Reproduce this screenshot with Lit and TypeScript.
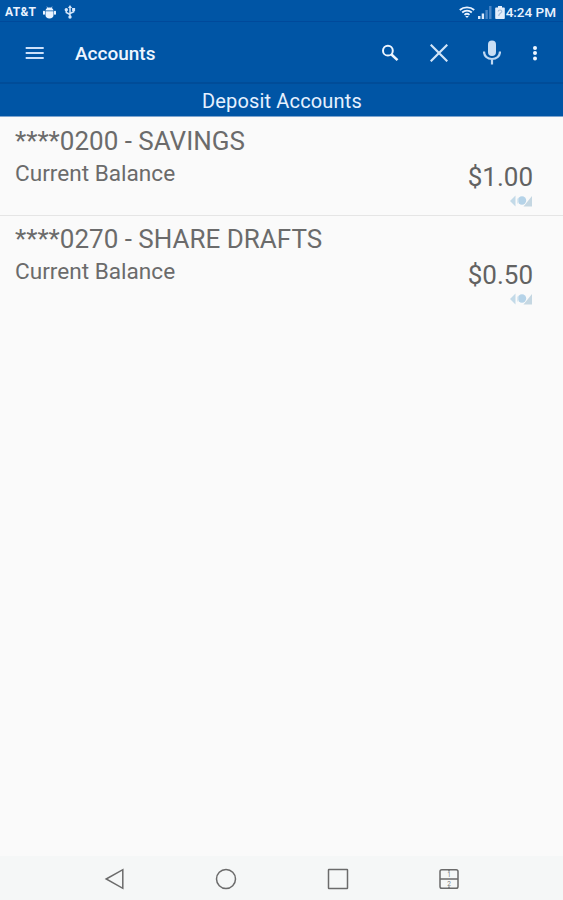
import { LitElement, html, css } from "lit";
import { customElement, property } from "lit/decorators.js";

@customElement("status-bar")
class StatusBar extends LitElement {
  static styles = css`
    :host { display: flex; align-items: center; height: 22px; box-sizing: border-box; padding: 3px 7px 0 5px; color: #eaf3ff; border-bottom: 1px solid #00499a; }
    .carrier { font-size: 12px; font-weight: 700; width: 38px; line-height: 19px; letter-spacing: 0.3px; white-space: nowrap; }
    .grow { flex: 1; }
    .time { font-size: 13.500px; line-height: 19px; font-weight: 500; white-space: nowrap; }
    svg { display: block; flex: none; }
    .usb { margin-left: 8px; }
    .signal { margin-left: 3px; }
    .battery { margin: 0 1px 0 3px; }
  `;
  render() {
    return html`
      <span class="carrier">AT&amp;T</span>
      <svg width="13" height="13" viewBox="0 0 13 13" fill="#eaf3ff"><path d="M2.400 4.600C2.700 3.400 3.300 2.600 4.200 2.100L3.500.8l.5-.3.8 1.300c1-.4 2.400-.4 3.400 0L9 .5l.5.3-.7 1.300c.9.5 1.500 1.300 1.800 2.500zM2.500 5.200h8v3.700c0 2-1.500 3.600-4 3.600s-4-1.600-4-3.600zM0 5.600c0-1 2-1 2 0v2.400c0 1-2 1-2 0zM11 5.600c0-1 2-1 2 0v2.400c0 1-2 1-2 0z"/></svg>
      <svg class="usb" width="12" height="14" viewBox="0 0 12 14"><g fill="none" stroke="#d5e6fa" stroke-width="1.500"><path d="M6 2v9M6 9.500L2.300 7.500V5M6 8.500l3.700-1.700V4.500"/></g><g fill="#d5e6fa"><path d="M6 0l2.100 3H3.900z"/><circle cx="6" cy="12" r="1.700"/><circle cx="2.300" cy="4.700" r="1.700"/><path d="M8.100 3h3v3h-3z"/></g></svg>
      <span class="grow"></span>
      <svg width="16" height="13" viewBox="0 0 16 13"><g fill="none" stroke="#eaf3ff" stroke-width="1.800"><path d="M.8 4c4-3.600 10.400-3.600 14.400 0M3.200 6.500c2.700-2.500 6.900-2.500 9.600 0M5.500 8.900c1.500-1.400 3.500-1.400 5 0"/></g><path fill="#eaf3ff" d="M6.200 10h3.600L8 12.100z"/></svg>
      <svg class="signal" width="14" height="13" viewBox="0 0 14 13"><path fill="#dbe9fa" d="M0 10h2.400v3H0zM3.700 7.500h2.400V13H3.700z"/><path fill="#4a86c6" d="M7.400 4h2.400v9H7.400zM11.100 0h2.400v13h-2.400z"/></svg>
      <svg class="battery" width="10" height="13" viewBox="0 0 10 13"><path fill="#e4eefb" d="M3 0h4v1.500h2c.5 0 .8.3.8.8V12c0 .6-.3 1-.8 1H1c-.5 0-.8-.4-.8-1V2.300c0-.5.300-.8.800-.8h2z"/><path d="M3.200 5.500c0-2 3.600-2 3.600 0 0 1.300-3.100 2-3.100 4.500" fill="none" stroke="#a5bfdd" stroke-width="1.200"/></svg>
      <span class="time">4:24 PM</span>
    `;
  }
}

@customElement("app-toolbar")
class AppToolbar extends LitElement {
  static styles = css`
    :host { display: flex; align-items: center; height: 62px; box-sizing: border-box; padding: 2px 25px 0 25px; border-bottom: 2px solid #004c98; }
    .title { margin-left: 31px; flex: 1; color: #eef6ff; font-size: 19px; font-weight: 500; line-height: 26px; padding-top: 1px; white-space: nowrap; }
    .actions { display: flex; align-items: center; }
    svg { display: block; flex: none; }
    .close { margin-left: 31px; }
    .mic { margin-left: 35px; }
    .more { margin-left: 31px; }
  `;
  render() {
    return html`
      <svg width="19" height="14" viewBox="0 0 19 14" fill="#cce0fa"><path d="M.7 1h18v2.100h-18zM.7 6h18v2.100h-18zM.7 11h18v2.100h-18z"/></svg>
      <span class="title">Accounts</span>
      <div class="actions">
        <svg width="18" height="18" viewBox="0 0 18 18" fill="none" stroke="#eef6ff"><circle cx="6.900" cy="6.700" r="4.900" stroke-width="2"/><path d="M10.500 10.500l6 5.700" stroke-width="2.500"/></svg>
        <svg class="close" width="18" height="18" viewBox="0 0 18 18" fill="none" stroke="#d0e4f8" stroke-width="2.200"><path d="M.7.700l16.600 16.600M17.300.700L.700 17.300"/></svg>
        <svg class="mic" width="18" height="26" viewBox="0 0 18 26"><rect x="5" y="0.500" width="8" height="15.500" rx="4" fill="#c9def4"/><path d="M1 11.500c0 4.500 3.400 7.500 8 7.500s8-3 8-7.500M9 19v5.500" fill="none" stroke="#bfd8f2" stroke-width="2.200"/></svg>
        <svg class="more" width="6" height="18" viewBox="0 0 6 18" fill="#eef6ff"><circle cx="3" cy="3.900" r="2"/><circle cx="3" cy="9.100" r="2"/><circle cx="3" cy="14.400" r="2"/></svg>
      </div>
    `;
  }
}

@customElement("account-row")
class AccountRow extends LitElement {
  @property() name = "";
  @property() amount = "";
  static styles = css`
    :host { display: grid; grid-template-columns: 1fr auto; grid-template-rows: 39px auto; height: 97px; padding: 0 30px 0 15px; color: #6b6b6b; white-space: nowrap; }
    .name { grid-column: 1 / 3; font-size: 26px; line-height: 30px; padding-top: 8px; }
    .label { font-size: 22.600px; line-height: 28px; padding-top: 3px; }
    .value { display: flex; flex-direction: column; align-items: flex-end; }
    .amount { font-size: 26px; line-height: 30px; padding-top: 5px; color: #626262; }
    svg { display: block; margin-top: 3px; }
  `;
  render() {
    return html`
      <span class="name">${this.name}</span>
      <span class="label">Current Balance</span>
      <div class="value">
        <span class="amount">${this.amount}</span>
        <svg width="23" height="12" viewBox="0 0 23 12"><path fill="#c3dae8" d="M0 6L5.500.5v11z"/><circle cx="12" cy="5.500" r="4.200" fill="#b5d3e8"/><path fill="#c5d7e2" d="M22 1v10.500h-8.500z"/><path fill="#dce9f1" d="M7 3.500h1.500v5H7z"/></svg>
      </div>
    `;
  }
}

@customElement("nav-bar")
class NavBar extends LitElement {
  static styles = css`
    :host { display: flex; height: 44px; padding: 0 58px 0 59px; background: #f5f7f7; }
    .slot { flex: 1; display: flex; align-items: center; justify-content: center; padding-top: 2px; }
    svg { display: block; }
    .digit { font-size: 6.500px; fill: #777; }
  `;
  render() {
    return html`
      <div class="slot"><svg width="22" height="22" viewBox="0 0 22 22" fill="none" stroke="#6b6b6b" stroke-width="1.500"><path d="M2.200 11L18.800 1.700v18.600z"/></svg></div>
      <div class="slot"><svg width="22" height="22" viewBox="0 0 22 22" fill="none" stroke="#6b6b6b" stroke-width="1.500"><circle cx="11" cy="11" r="9.500"/></svg></div>
      <div class="slot"><svg width="22" height="22" viewBox="0 0 22 22" fill="none" stroke="#6b6b6b" stroke-width="1.500"><rect x="1.500" y="1.500" width="19" height="19" rx=".5"/></svg></div>
      <div class="slot"><svg width="22" height="22" viewBox="0 0 22 22"><path d="M2 11h18M11 1.500v2M11 18.500v2" fill="none" stroke="#6b6b6b" stroke-width="1.400"/><rect x="2" y="1.700" width="18" height="18.600" rx="1.800" fill="none" stroke="#6b6b6b" stroke-width="1.500"/><text class="digit" x="11" y="9" text-anchor="middle">1</text><text class="digit" x="11" y="18" text-anchor="middle">2</text></svg></div>
    `;
  }
}

@customElement("app-root")
class AppRoot extends LitElement {
  static styles = css`
    :host { display: flex; flex-direction: column; height: 900px; background: #fafafa; font-family: Roboto, "Liberation Sans", sans-serif; }
    .top { background: #0055a5; }
    .section { height: 32px; border-bottom: 1px solid #7ea5cf; text-align: center; color: #e6f1ff; font-size: 20px; line-height: 34px; white-space: nowrap; letter-spacing: 0.15px; text-indent: 1px; }
    .list { flex: 1; padding-top: 1px; }
    .divider { height: 1px; background: #e5e5e5; }
  `;
  render() {
    return html`
      <div class="top">
        <status-bar></status-bar>
        <app-toolbar></app-toolbar>
        <div class="section">Deposit Accounts</div>
      </div>
      <div class="list">
        <account-row name="****0200 - SAVINGS" amount="$1.00"></account-row>
        <div class="divider"></div>
        <account-row name="****0270 - SHARE DRAFTS" amount="$0.50"></account-row>
      </div>
      <nav-bar></nav-bar>
    `;
  }
}
